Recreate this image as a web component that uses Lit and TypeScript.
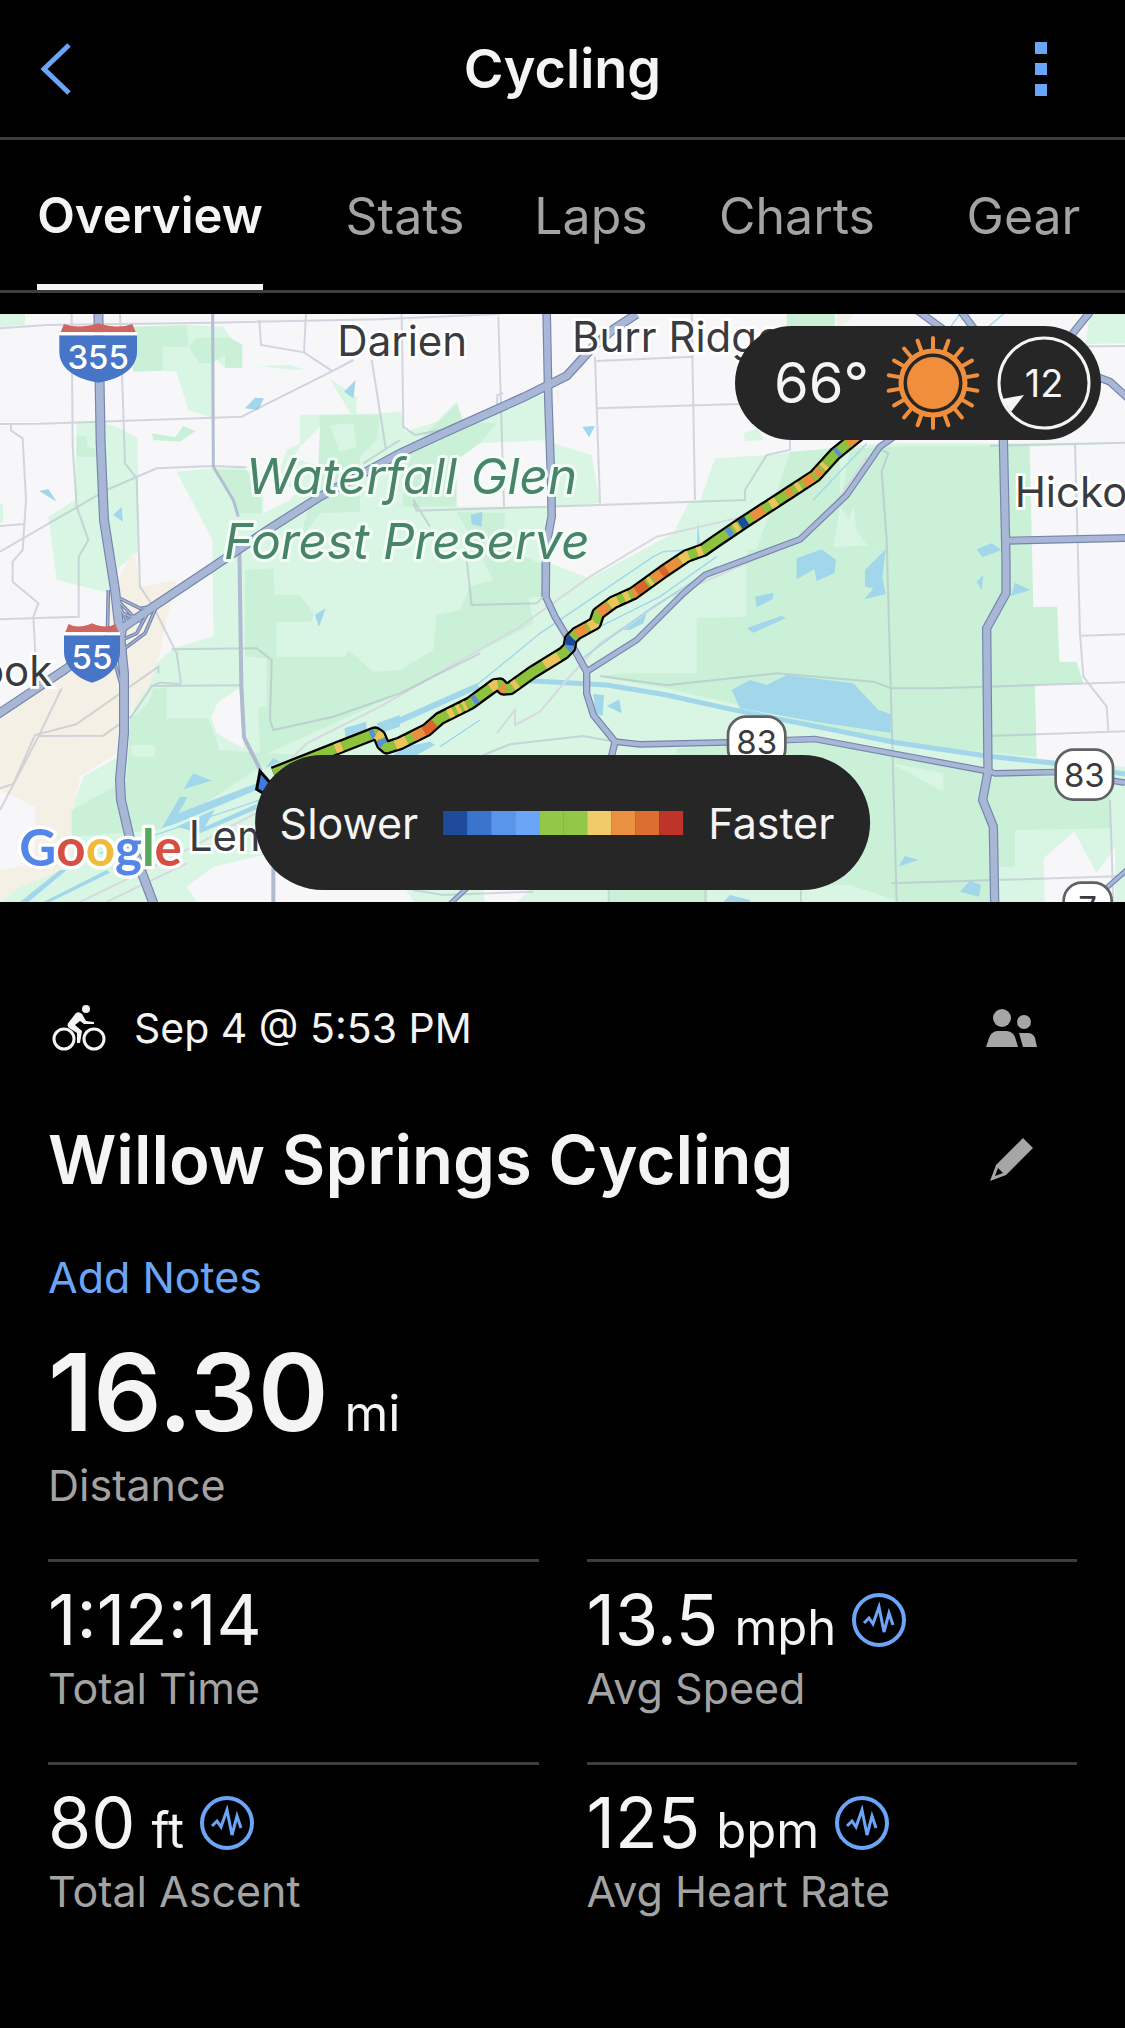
import { LitElement, html, svg, css } from "lit";
import { customElement, property } from "lit/decorators.js";

const FONT = css`Inter, "Liberation Sans", sans-serif`;

/* ---------- map data: drawing units are a third of a pixel ---------- */

const LIGHT = [
  "0,42 75,42 75,75 0,80",
  "490,140 560,75 670,80 695,120 725,130 725,203 675,203 640,170 640,355 565,330 530,215 490,212",
  "230,368 300,365 350,380 413,415 415,755 360,800 330,880 170,840 145,650 225,600",
  "988,235 1070,290 1070,345 1055,345",
  "770,198 870,195 920,210 860,208",
  "0,610 8,612 10,665 0,670",
  "1140,340 1205,335 1210,400 1140,440",
  "900,345 1205,338 1215,395 1310,365 1370,305 1390,365 1440,350 1520,300 1635,285 1640,640 790,640 860,450 900,430",
  "1440,370 1530,320 1635,290 1635,328",
  "1660,430 1775,465 1800,610 1660,620",
  "3270,42 3375,42 3375,130 3255,132",
  "2230,400 2275,385 2290,420 2235,424",
  "530,515 640,505 720,500 790,540 790,640 1640,625 1650,790 1770,835 2020,700 2065,610 2100,603 2145,475 2300,465 2530,440 2655,430 3375,430 3375,1806 1240,1806 1180,1700 900,1640 640,1700 560,1760 590,1806 60,1806 215,1610 215,1530 250,1430 390,1350 390,1250 470,1090 520,1045 640,1005 637,720",
  "0,1806 60,1760 215,1610 400,1590 400,1806",
];
const MID = [
  "400,80 560,75 565,140 490,140 490,212 400,215",
  "565,140 590,113 690,113 727,135 727,203 675,203 675,165 635,190 600,190",
  "455,400 525,412 550,378 587,393 540,425 460,420",
  "230,405 260,410 262,440 290,450 290,470 230,470",
  "960,345 1140,345 1130,420 1080,470 1080,635 960,640 900,720 940,560",
  "1205,470 1310,370 1370,310 1390,365 1490,370 1400,480 1370,620 1210,620",
  "2360,42 2505,42 2505,80 2360,80",
  "640,510 740,510 785,560 785,640 715,640 690,590",
  "735,810 820,805 825,885 900,885 940,940 935,965 830,965 830,1070 1035,1070 1045,1050 1120,1115 1200,1110 1300,1050 1310,945 1380,930 1410,860 1490,840 1580,860 1600,970 1200,1180 780,1370 770,1070 735,1070",
  "1370,635 1515,640 1510,740 1640,800 1640,890 1420,900 1410,860 1480,840",
  "400,1250 500,1160 500,1255 625,1255 655,1335 655,1350 735,1355 1000,1370 780,1400 600,1520 480,1590 215,1610 215,1530 380,1440 390,1250",
  "460,1165 500,1165 500,1345 400,1345",
  "2370,455 2520,445 2520,620 2500,740 2270,750",
  "2240,750 2655,735 2655,440 3088,435 3100,920 3172,920 3178,1085 3230,1085 3250,1150 3105,1155 3112,1370 2670,1330 2175,1205 2000,1165 1800,1130 1860,1120 2090,1120 2090,955 2240,950",
  "2550,445 2655,440 2655,735 2600,735 2520,620",
  "2030,1345 2440,1325 2800,1390 2950,1420 3330,1440 3330,1585 3045,1590 3045,1700 2990,1700 2990,1806 2700,1806 2550,1755 2030,1750",
  "1830,1770 2115,1770 2115,1806 1830,1806",
];
const CREAM = [
  "0,1260 190,1110 330,1040 330,880 400,755 425,860 530,840 500,960 480,1060 450,1150 390,1240 350,1360 240,1430 215,1550 215,1700 60,1760 0,1806",
  "1670,270 1680,270 1672,320",
  "2510,42 2560,42 2540,70 2510,80",
];
const WHITE = [
  "0,1470 105,1520 105,1690 0,1710",
  "515,925 636,905 642,1008 520,1045",
  "625,1225 718,1165 730,1345 650,1300",
  "3090,440 3375,430 3375,1400 3110,1375 3105,1155 3250,1150 3230,1085 3178,1085 3172,920 3100,920",
  "3130,1675 3223,1595 3290,1720 3345,1640 3345,1806 3135,1806",
  "900,440 960,380 955,500 880,470",
  "1370,480 1440,430 1640,420 1640,620 1370,620",
  "800,560 900,560 870,600 790,640",
  "1450,1770 1590,1770 1550,1806 1455,1806",
];
const PALE = [
  "990,375 1060,370 1070,440 1020,455",
  "640,830 652,830 668,990 648,1010",
  "500,1170 620,1170 665,1180 635,1250 500,1255",
  "735,1075 800,1075 800,1220 735,1220",
  "395,1335 465,1335 465,1370 395,1370",
  "2675,1390 2830,1420 2830,1475",
  "3045,1595 3200,1590 3130,1675 3130,1730 3045,1730",
  "2560,620 2575,735 2520,735",
];
const WATER = [
  "765,293 792,295 775,330 735,325",
  "1067,240 1060,295 1032,275",
  "117,573 145,567 170,605",
  "340,645 365,620 368,665",
  "945,945 977,925 957,980",
  "1747,380 1785,378 1767,412",
  "1412,645 1447,635 1445,680 1415,672",
  "2390,775 2465,748 2508,780 2503,820 2450,843 2443,808 2390,838",
  "2657,748 2595,810 2595,860 2620,865 2593,898 2657,882 2647,830",
  "2930,748 2975,730 3005,750 2947,772",
  "2930,845 2950,825 2945,870",
  "3045,848 3090,870 3033,888",
  "2265,890 2320,878 2318,898 2270,922",
  "2240,985 2345,947 2357,955 2260,998",
  "2195,1170 2250,1140 2300,1155 2360,1125 2560,1150 2635,1230 2672,1242 2672,1298 2475,1270 2220,1225",
  "2715,1668 2755,1680 2695,1700",
  "2910,1742 2943,1755 2937,1790 2880,1775",
  "1780,1182 1812,1185 1808,1248 1785,1240",
  "1820,1218 1858,1198 1865,1240",
  "1033,1285 1098,1265 1100,1300 1040,1330",
  "795,1405 820,1375 840,1385",
  "1140,1278 1430,1150 1440,1165 1140,1298",
  "1130,1270 1200,1245 1200,1280 1140,1300",
  "485,1585 540,1490 562,1492 535,1540 770,1450 775,1468 530,1570",
  "580,1420 635,1442 550,1468",
  "530,1580 645,1528 615,1580 770,1512 770,1528 600,1600",
  "60,1806 180,1710 200,1710 85,1806",
  "130,1806 320,1710 330,1718 150,1806",
  "1215,1340 1290,1325 1305,1335 1250,1365 1180,1365",
  "2170,1806 2190,1785 2250,1800 2250,1806",
  "1870,990 1940,940 1930,970 1890,990",
  "2090,735 2094,662 2100,733",
];
const MINOR = [
  "M0,85 L140,75 L640,68 L1140,58 L1500,42",
  "M0,372 L120,371 L725,350 L1000,212 L1060,180",
  "M778,60 L783,135 L912,157 L995,212 M918,42 L912,157",
  "M215,42 L218,440 L230,620 L265,720 L236,770 L236,950 L0,958",
  "M360,42 L375,490 L410,535 L420,860 L460,920 L530,1060 L543,1150",
  "M33,370 V392 L68,415 L78,600 L68,750 L38,785 V845 L115,910 L100,950 L106,1060",
  "M0,755 L320,570 L470,505 L640,498 L740,502",
  "M0,678 L75,672",
  "M1115,180 L1158,450 M1205,42 L1210,380 L1245,405 L1350,385",
  "M1495,50 L1512,620 M1490,340 L1492,285 L1510,280",
  "M1240,610 L1250,632 L1640,620 L2235,600 V570 L2300,465 L2370,450 V390",
  "M1785,170 L1800,610 M1790,183 L2080,170 M1790,325 L2220,312 M2075,42 L2085,600",
  "M1400,780 L1415,915 L1610,910 L1640,880",
  "M1090,490 L1200,420 M1240,600 L1290,680",
  "M2625,440 L2665,460 L2645,515 L2660,720 L2690,1806",
  "M2970,437 L3070,435 L3375,428 M3225,430 L3240,1000 L3250,1130 L3320,1220 L3325,1295",
  "M3245,1007 L3375,1003 M2675,1165 L2810,1165 L3375,1147 M2960,1308 L3375,1294",
  "M3135,140 L3375,138 M3330,1500 L3340,1806 M2675,1750 L3375,1728 M2403,1770 V1806",
  "M1800,1128 L2000,1156 L2330,1120 L2620,1145 L2675,1165",
  "M450,1160 L480,1148 L543,1152 M455,1158 L725,1156 M390,1255 L455,1160",
  "M115,1308 L310,1307 L390,1250 M185,1165 L115,1310 L0,1530 M0,1465 L40,1452 L105,1305 L228,1273 L290,1230 L475,1100 V1120",
  "M515,1048 L770,1045 L815,1080 L810,1260 L820,1290 L1000,1250 L1200,1180 L1440,1060",
  "M1450,1365 L1530,1333 L1750,1308 L1845,1325 M1240,1770 L1330,1785 L1600,1775 M1826,1770 V1806 M2117,1770 V1806",
];
const RAIL = [
  "M850,1400 L920,1330 L1140,1220 L1560,980 L1770,830 L1970,710 L2230,650 L2430,520 L2560,430",
  "M1490,1300 L1545,1230 V1275 L1620,1235 L1700,1140 L1800,1030 L2010,890 L2400,720 L2500,620 L2600,470",
  "M240,1806 L540,1660 L880,1480 M320,1806 L560,1690",
];
const STREAM = [
  "M1400,1180 L1620,1000 L1960,770 L1990,755 L2060,750",
  "M1800,980 L1980,890 L2150,770 M1740,1080 L1960,920 L2150,800",
  "M2440,600 L2600,430 M1320,1340 L1440,1260 M300,1660 L780,1500",
  "M2830,110 L2880,42 M2930,110 L3010,42",
];
const HIGHWAYS: [number, string][] = [
  [20, "M1760,1115 L1910,1020 L2050,880 L2115,825 L2400,718 L2540,585 L2640,440 L2690,405"],
  [20, "M1845,1325 L1920,1333 L2180,1327 L2445,1317 L2970,1415 L2985,1420 L3170,1416 L3375,1448"],
  [24, "M3020,722 L3375,714"],
  [22, "M1637,890 L1665,950 L1710,1025 L1760,1115 L1760,1180 L1780,1245 L1845,1325 L1832,1380"],
  [26, "M1640,42 L1645,300 L1654,560 L1655,650 L1638,740 L1637,890"],
  [28, "M3010,415 L3018,780 L3018,880 L2960,985 L2964,1415 L2948,1500 L2980,1580 L2984,1806"],
  [24, "M2750,30 L2860,110 M2880,30 L2940,110 M3275,30 L3210,110 M3290,230 L3330,245 L3385,295"],
  [16, "M3380,1710 L3310,1772 M1350,1812 L1400,1765"],
  [11, "M325,870 L322,1010 L365,1160 M360,895 L420,925 L470,918 L435,1000 L375,1045 M352,900 L400,950 L460,925 M365,1020 L410,1000 L440,945 M372,1010 L380,960 L350,905 M370,940 L425,965"],
  [28, "M-10,1245 L190,1112 L380,975 L460,920 L640,800 L800,692 L960,590 L1200,460 L1330,400 L1570,292 L1700,228 L1730,195 L1780,140 L1840,88 L1910,42"],
  [30, "M295,30 L302,430 L312,660 L345,870 L360,1000 L372,1120 L372,1300 L360,1440 L363,1500 L393,1630 L430,1730 L462,1815"],
];
const ROUTE =
  "M820,1420 L1010,1345 L1125,1300 L1138,1308 L1148,1332 L1160,1343 L1200,1330 L1280,1290 L1320,1255 L1410,1210 L1485,1155 L1500,1153 L1510,1166 L1530,1165 L1600,1115 L1690,1060 L1708,1042 L1712,1018 L1730,1000 L1785,970 L1795,940 L1840,907 L1900,880 L1990,815 L2060,768 L2110,750 L2150,722 L2230,668 L2365,580 L2445,528 L2505,462 L2600,385";
const ROUTE_LENGTH = 1780;
const Y = "#edc35c", O = "#ea8f3e", R = "#d9632b", B = "#5b8fd6", N = "#1c4a9b";
/* colour, start and end, measured eastward along the ride */
const PACE: [string, number, number][] = [
  [Y, 985, 1002], [B, 1078, 1090], [Y, 1094, 1110], [B, 1112, 1126], [Y, 1160, 1190], [O, 1208, 1238],
  [R, 1238, 1272], [Y, 1312, 1326], [Y, 1336, 1346], [Y, 1354, 1362], [B, 1382, 1394], [Y, 1436, 1456],
  [O, 1466, 1482], [Y, 1500, 1514], [Y, 1595, 1636], [B, 1664, 1676], [N, 1676, 1696], [O, 1710, 1740],
  [Y, 1746, 1764], [O, 1790, 1820], [Y, 1824, 1848], [Y, 1864, 1878], [O, 1886, 1898], [R, 1898, 1930],
  [Y, 1936, 1946], [O, 1950, 1974], [R, 1974, 1992], [O, 1992, 2030], [Y, 2032, 2056], [Y, 2078, 2092],
  [B, 2166, 2180], [Y, 2188, 2200], [N, 2204, 2224], [O, 2240, 2274], [Y, 2294, 2312], [O, 2342, 2358],
  [Y, 2370, 2382], [O, 2392, 2420], [O, 2430, 2446], [Y, 2454, 2464], [B, 2502, 2512], [O, 2540, 2600],
];

const polys = (list: string[], fill: string) =>
  list.map((p) => svg`<polygon points=${p} fill=${fill}></polygon>`);
const lines = (list: string[], stroke: string, width: number) =>
  list.map((d) => svg`<path d=${d} fill="none" stroke=${stroke} stroke-width=${width}></path>`);

const interstate = (x: number, y: number, w: number, label: string) => svg`
  <g>
    <path d="M${x},${y + 36} H${x + w} V${y + 85} C${x + w},${y + 130} ${x + w - 40},${y + 165} ${x + w / 2},${y + 178}
      C${x + 40},${y + 165} ${x},${y + 130} ${x},${y + 85} Z" fill="#4775c8"></path>
    <path d="M${x + 4},${y + 26} L${x + 14},${y + 2} Q${x + w / 4},${y + 18} ${x + w / 2},${y}
      Q${x + (w * 3) / 4},${y + 18} ${x + w - 14},${y + 2} L${x + w - 4},${y + 26} Z" fill="#cf6661"></path>
    <path d="M${x},${y + 31} H${x + w}" stroke="#fff" stroke-width="9"></path>
    <text class="shield" x=${x + w / 2} y=${y + 137}>${label}</text>
  </g>`;
const stateRoute = (x: number, y: number, w: number, label: string) => svg`
  <g>
    <rect x=${x + 4} y=${y + 4} width=${w - 8} height="150" rx="54" fill="#fff" stroke="#606163" stroke-width="8"></rect>
    <text class="route" x=${x + w / 2} y=${y + 115}>${label}</text>
  </g>`;

@customElement("ride-map")
export class RideMap extends LitElement {
  static styles = css`
    :host { display: block; position: relative; overflow: hidden; background: #f7f7f9; }
    .canvas { display: block; width: 100%; height: auto; }
    text { font-family: ${FONT}; }
    .town { font-size: 126px; fill: #3a3b40; stroke: #fff; stroke-width: 16px; paint-order: stroke; }
    .park { font-size: 148px; font-style: italic; fill: #478468; stroke: #f3fcf6; stroke-width: 18px; paint-order: stroke; stroke-linejoin: round; }
    .shield { font-size: 99px; font-weight: 500; fill: #fff; text-anchor: middle; }
    .route { font-size: 99px; fill: #3a3b40; text-anchor: middle; }
    .brand { font-family: Lato, ${FONT}; font-size: 153px; font-weight: 700; stroke: #fff; stroke-width: 20px; paint-order: stroke; stroke-linejoin: round; }
    .pill { position: absolute; display: flex; align-items: center; background: #262626; color: #f4f4f4; font-family: ${FONT}; }
    .weather { top: 12px; right: 24px; height: 114px; gap: 17px; padding: 0 10px 0 39px; border-radius: 57px; }
    .temp { font-size: 56px; }
    .icon { display: block; width: 94px; height: 94px; }
    .wind { position: relative; display: grid; place-items: center; }
    .speed { position: absolute; font-size: 38px; }
    .legend { bottom: 12px; left: 50%; transform: translateX(-50%); height: 135px; gap: 25px; padding: 0 36px 0 25px; border-radius: 68px; font-size: 43px; }
    .ramp { display: flex; }
    .swatch { width: 24px; height: 24px; }
  `;

  render() {
    const ramp = ["#1f4b9c", "#3a74cc", "#5796ea", "#6ba5f7", "#92c846", "#92c846", "#f0cb67", "#e99141", "#dc6e30", "#bf332b"];
    return html`
      <svg class="canvas" viewBox="0 42 3375 1764" role="img" aria-label="Map of the ride">
        <rect x="0" y="42" width="3375" height="1764" fill="#f7f7f9"></rect>
        ${polys(LIGHT, "#d9f6e4")} ${polys(CREAM, "#f4f0e6")} ${polys(MID, "#caf0d8")}
        ${polys(WHITE, "#f7f7f9")} ${polys(PALE, "#d9f6e4")} ${polys(WATER, "#a1d6eb")}
        ${lines(["M1590,1142 L1820,1155 L2000,1185 L2180,1225 L2690,1328 L2960,1368 L3165,1390 L3375,1422"], "#a1d6eb", 15)}
        ${lines(RAIL, "#d6dadf", 6)} ${lines(STREAM, "#a1d6eb", 4)}
        <g opacity="0.5">${lines(MINOR, "#aeb5c6", 6)}</g>
        ${lines(["M638,42 L640,500 L700,600 L715,650"], "#b3bdd1", 9)}
        ${lines(["M718,740 L724,1160 L732,1312 L782,1412 M820,1700 V1806"], "#b0bad0", 12)}
        ${HIGHWAYS.map(([w, d]) => lines([d], "#7585ad", w))}
        ${HIGHWAYS.map(([w, d]) => lines([d], "#a9b7d6", w - 7))}
        <path d="M780,1414 L812,1450 L790,1480 L770,1468 Z" fill="#3f7ce0" stroke="#000" stroke-width="9"></path>
        <g fill="none" stroke-linejoin="round">
          <path d=${ROUTE} stroke="#000" stroke-width="42"></path>
          <path d=${ROUTE} stroke="#8cc23c" stroke-width="28"></path>
          ${PACE.map(([c, a, b]) => svg`<path d=${ROUTE} stroke=${c} stroke-width="28" pathLength=${ROUTE_LENGTH}
            stroke-dasharray="0 ${a - 820} ${b - a} 4000"></path>`)}
        </g>
        ${interstate(178, 70, 233, "355")} ${interstate(192, 970, 168, "55")}
        ${stateRoute(2180, 1246, 180, "83")} ${stateRoute(3163, 1345, 180, "83")} ${stateRoute(3187, 1744, 152, "7")}
        <text class="town" x="1012" y="168">Darien</text>
        <text class="town" x="1716" y="157">Burr Ridge</text>
        <text class="town" x="3044" y="621">Hickory</text>
        <text class="town" x="157" y="1157" text-anchor="end">brook</text>
        <text class="town" x="566" y="1653">Lem</text>
        <text class="park" x="738" y="583">Waterfall Glen</text>
        <text class="park" x="672" y="777">Forest Preserve</text>
        <text class="brand" x="58" y="1698"><tspan fill="#5486e8">G</tspan><tspan fill="#d64f42">o</tspan><tspan fill="#eebb3b">o</tspan><tspan fill="#5486e8">g</tspan><tspan fill="#58a65c">l</tspan><tspan fill="#d64f42">e</tspan></text>
      </svg>
      <div class="pill weather">
        <span class="temp">66°</span>
        <svg class="icon" viewBox="-47 -47 94 94" aria-hidden="true">
          <circle r="26" fill="#f18e3c"></circle>
          <circle r="32" fill="none" stroke="#f18e3c" stroke-width="5"></circle>
          ${Array.from({ length: 18 }, (_, i) => svg`<path d="M0,-34 V-45" stroke="#f18e3c" stroke-width="4"
            stroke-linecap="round" transform="rotate(${i * 20})"></path>`)}
        </svg>
        <div class="wind">
          <svg class="icon" viewBox="-47 -47 94 94" aria-hidden="true">
            <circle r="45" fill="none" stroke="#f4f4f4" stroke-width="3"></circle>
            <path d="M-42,16 L-20,12 L-33,29 Z" fill="#f4f4f4"></path>
          </svg>
          <span class="speed">12</span>
        </div>
      </div>
      <div class="pill legend">
        <span>Slower</span>
        <div class="ramp">${ramp.map((c) => html`<i class="swatch" style="background:${c}"></i>`)}</div>
        <span>Faster</span>
      </div>
    `;
  }
}

@customElement("stat-cell")
export class StatCell extends LitElement {
  @property() value = "";
  @property() unit = "";
  @property() label = "";
  @property({ type: Boolean }) graph = false;

  static styles = css`
    :host { display: block; box-sizing: border-box; height: 203px; border-top: 3px solid #3e3e3e; padding-top: 20px; font-family: ${FONT}; }
    .line { display: flex; align-items: baseline; gap: 16px; height: 76px; line-height: 76px; color: #f4f4f4; }
    .value { font-size: 70px; }
    .unit { font-size: 49px; }
    .chart { align-self: center; padding: 0; border: 0; background: none; }
    .chart svg { display: block; width: 54px; height: 54px; }
    .label { font-size: 43px; line-height: 60px; color: #a3a3a3; }
  `;

  render() {
    return html`
      <div class="line">
        <span class="value">${this.value}</span>
        ${this.unit ? html`<span class="unit">${this.unit}</span>` : null}
        ${this.graph
          ? html`<button class="chart" aria-label="Chart of ${this.label}">
              <svg viewBox="0 0 54 54" fill="none" stroke="#6ba5f7">
                <circle cx="27" cy="27" r="25" stroke-width="4"></circle>
                <path d="M12,30 L17,25 L21,31 L27,14 L32,39 L37,20 L41,32" stroke-width="3"></path>
              </svg>
            </button>`
          : null}
      </div>
      <div class="label">${this.label}</div>
    `;
  }
}

@customElement("app-root")
export class AppRoot extends LitElement {
  static styles = css`
    :host { display: block; min-height: 100vh; background: #000; color: #f4f4f4; font-family: ${FONT}; }
    button { padding: 0; border: 0; background: none; font: inherit; color: inherit; }
    svg { display: block; }
    .bar { display: grid; grid-template-columns: 168px 1fr 168px; align-items: center; height: 137px; border-bottom: 3px solid #3e3e3e; }
    .bar button { display: flex; }
    .back-button { padding-left: 40px; }
    .more-button { padding-left: 78px; }
    .title { margin: 0; text-align: center; font-size: 54px; font-weight: 600; line-height: 60px; }
    .back { width: 32px; height: 52px; }
    .more { width: 12px; height: 54px; }
    .tabs { display: grid; grid-template-columns: 300fr 210fr 162fr 250fr 203fr; height: 150px; border-bottom: 3px solid #3e3e3e; margin-bottom: 21px; }
    .tab { display: flex; justify-content: center; font-size: 50px; line-height: 60px; color: #a3a3a3; text-decoration: none; }
    .tab span { box-sizing: border-box; padding: 46px 0 0; border-bottom: 6px solid transparent; }
    .active { font-size: 49px; color: #f4f4f4; font-weight: 600; }
    .active span { border-color: #f4f4f4; }
    .details { padding: 96px 48px 0; }
    .row { display: flex; align-items: center; justify-content: space-between; padding-right: 40px; }
    .when { display: flex; align-items: center; gap: 28px; padding-left: 4px; font-size: 41px; line-height: 60px; }
    .bike { width: 54px; height: 46px; }
    .people { width: 51px; height: 38px; }
    .pencil { width: 51px; height: 44px; }
    .name { margin: 0; font-size: 67px; font-weight: 600; line-height: 84px; }
    .headline { padding-top: 60px; }
    .notes { display: block; margin-top: 45px; font-size: 43px; line-height: 60px; color: #6ba5f7; text-decoration: none; }
    .total { display: flex; align-items: baseline; gap: 16px; margin-top: 43px; line-height: 84px; }
    .amount { font-size: 107px; font-weight: 600; }
    .unit { font-size: 50px; }
    .label { font-size: 43px; line-height: 60px; color: #a3a3a3; }
    .stats { display: grid; grid-template-columns: 1fr 1fr; column-gap: 48px; margin-top: 44px; }
  `;

  render() {
    const tabs = ["Overview", "Stats", "Laps", "Charts", "Gear"];
    return html`
      <header class="bar">
        <button class="back-button" aria-label="Back">
          <svg class="back" viewBox="0 0 32 52"><path d="M29,2 L4,26 L29,50" fill="none" stroke="#6ba5f7" stroke-width="5"></path></svg>
        </button>
        <h1 class="title">Cycling</h1>
        <button class="more-button" aria-label="More">
          <svg class="more" viewBox="0 0 12 54" fill="#6ba5f7"><path d="M0,0h12v12H0zM0,21h12v12H0zM0,42h12v12H0z"></path></svg>
        </button>
      </header>
      <nav class="tabs">
        ${tabs.map((t, i) => html`<a class="tab ${i === 0 ? "active" : ""}" href="#${t.toLowerCase()}"><span>${t}</span></a>`)}
      </nav>
      <ride-map></ride-map>
      <main class="details">
        <div class="row">
          <div class="when">
            <svg class="bike" viewBox="0 0 54 46">
              <g fill="none" stroke="#f4f4f4">
                <circle cx="12" cy="34" r="10" stroke-width="3"></circle>
                <circle cx="42" cy="34" r="10" stroke-width="3"></circle>
              </g>
              <g fill="#f4f4f4">
                <circle cx="34" cy="4" r="4"></circle>
                <path d="M24,8 Q27,6 30,9 L34,16 L42,17 V19 L32,19 L28,16 L23,20 L30,26 L28,38 H25 L25,28 L17,23 Q14,20 17,17 Z"></path>
              </g>
            </svg>
            <span>Sep 4 @ 5:53 PM</span>
          </div>
          <button aria-label="Privacy">
            <svg class="people" viewBox="0 0 51 38" fill="#a6a6a6">
              <circle cx="16" cy="9" r="9"></circle><circle cx="38" cy="13" r="7"></circle>
              <path d="M0,38 L3,29 Q5,23 11,22 H21 Q27,23 29,28 L32,38 Z"></path>
              <path d="M33,24 H42 Q47,24 49,29 L51,38 H37 Z"></path>
            </svg>
          </button>
        </div>
        <div class="row headline">
          <h2 class="name">Willow Springs Cycling</h2>
          <button aria-label="Edit name">
            <svg class="pencil" viewBox="-4 0 51 44">
              <path d="M33,0 L43,10 L16,37 L0,43 L6,27 Z M8,30 L5,38 L13,35 Z" fill="#a6a6a6" fill-rule="evenodd"></path>
            </svg>
          </button>
        </div>
        <a class="notes" href="#notes">Add Notes</a>
        <div class="total"><span class="amount">16.30</span><span class="unit">mi</span></div>
        <div class="label">Distance</div>
        <section class="stats">
          <stat-cell value="1:12:14" label="Total Time"></stat-cell>
          <stat-cell value="13.5" unit="mph" label="Avg Speed" graph></stat-cell>
          <stat-cell value="80" unit="ft" label="Total Ascent" graph></stat-cell>
          <stat-cell value="125" unit="bpm" label="Avg Heart Rate" graph></stat-cell>
        </section>
      </main>
    `;
  }
}
